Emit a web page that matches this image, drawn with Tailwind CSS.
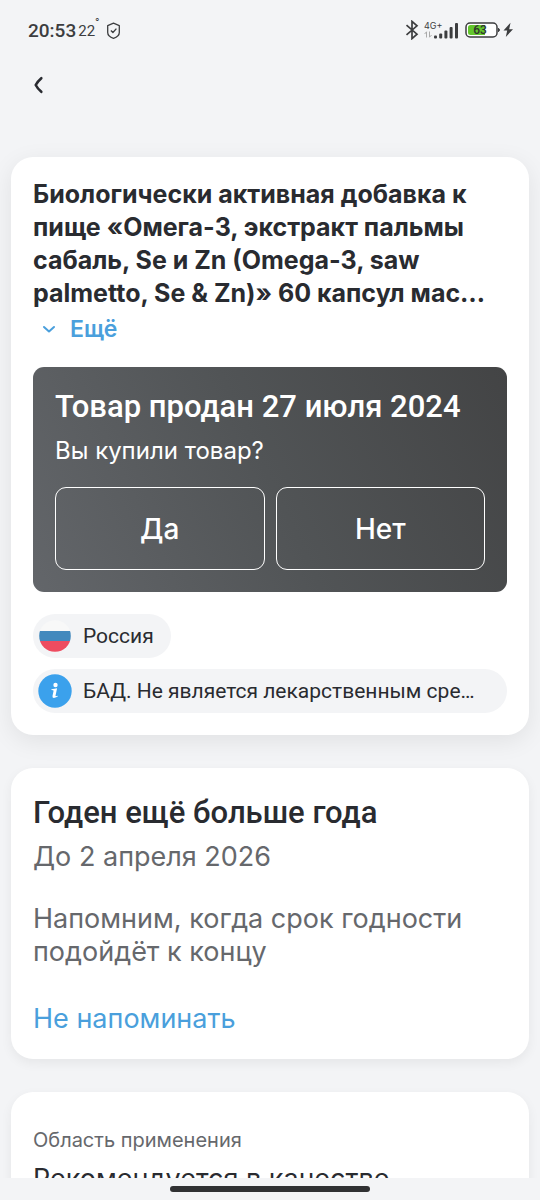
<!DOCTYPE html>
<html lang="ru">
<head>
<meta charset="utf-8">
<meta name="viewport" content="width=device-width, initial-scale=1">
<title>Карточка товара</title>
<script src="https://cdn.jsdelivr.net/npm/@tailwindcss/browser@4"></script>
</head>
<body class="flex h-screen flex-col bg-[#f3f4f6] font-['Inter',sans-serif] text-[#292b30]">
  <!-- Status bar -->
  <div class="flex h-[60px] shrink-0 items-center justify-between pr-[26px] pl-7 text-[#3c3d3f]">
    <div class="flex items-center pt-0.5">
      <span class="font-['Roboto',sans-serif] text-[19px] leading-6 font-medium">20:53</span>
      <span class="ml-0.5 flex font-['Roboto',sans-serif] text-[15px] leading-6 font-normal">22<span class="-mt-1 text-xs">°</span></span>
      <svg class="ml-1.5 h-[18px] w-[15px]" viewBox="0 0 15 18" fill="none" stroke="currentColor" stroke-width="1.3" stroke-linejoin="round"><path d="M7.5 1.2 13.3 3.6V10.6C13.3 13.4 10.6 15.4 7.5 16.4 4.4 15.4 1.7 13.4 1.7 10.6V3.6Z"/><path d="m4.9 8.5 2 2L10.4 6.6"/></svg>
    </div>
    <div class="flex items-center">
      <svg class="h-5 w-3.5" viewBox="0 0 14 20" fill="none" stroke="currentColor" stroke-width="1.7"><path d="m1.5 5.2 10.5 9L7 18.6V1.4L12 5.8 1.5 14.8"/></svg>
      <div class="ml-[5px] flex h-5 w-[35px] items-end">
        <div class="flex flex-col">
          <span class="w-2.5 text-[9px] leading-[10px] font-normal">4G+</span>
          <svg class="h-[9px] w-[9px]" viewBox="0 0 9 9" fill="none" stroke="#aaa" stroke-width="1"><path d="M2.500 6.500V.8L.6 3M5.500.5V6.200L7.600 4"/></svg>
        </div>
        <svg class="h-5 w-[25px]" viewBox="0 0 25 20" fill="currentColor"><rect x="0" y="15.500" width="3" height="3" rx="1"/><rect x="5.200" y="13.500" width="3" height="5" rx="1"/><rect x="10.400" y="10.500" width="3" height="8" rx="1"/><rect x="15.600" y="7" width="3" height="11.500" rx="1"/><rect x="21" y="3" width="3" height="15.500" rx="1"/></svg>
      </div>
      <svg class="ml-1.5 h-4 w-[49px]" viewBox="0 0 49 16"><rect x="1" y="1" width="31" height="14" rx="4" fill="#fff" stroke="#3c3d3f" stroke-width="1.500"/><path d="M5.500 3H20V13H5.500A2.500 2.500 0 0 1 3 10.500V5.500A2.500 2.500 0 0 1 5.500 3Z" fill="#62c62b"/><path d="M33.500 6.300q2 1.700 0 3.400Z" fill="#3c3d3f" stroke="#3c3d3f"/><text x="15" y="12" text-anchor="middle" font-family="Roboto,sans-serif" font-size="12" font-weight="500" fill="#30332e">63</text><path d="M45.500.8 38.500 8.600H42.200L40.800 15 48 7.200H44.200Z" fill="#3c3d3f"/></svg>
    </div>
  </div>

  <header class="flex h-[50px] shrink-0 items-center pl-[27px]">
    <button type="button" aria-label="Назад" class="flex size-6 items-center justify-center">
      <svg class="h-[18px] w-3" viewBox="0 0 12 18" fill="none" stroke="currentColor" stroke-width="2.600" stroke-linecap="round" stroke-linejoin="round"><path d="M8.300 2.200Q4.500 5.500 2.700 9 4.500 12.500 8.300 15.800"/></svg>
    </button>
  </header>

  <main class="min-h-0 flex-1 space-y-[33px] overflow-hidden px-[11px] pt-[47px]">
    <section class="rounded-[22px] bg-white px-[22px] pt-[21px] pb-[22px] shadow-[0_6px_24px_rgba(0,0,0,0.08)]">
      <h1 class="text-[25px] leading-[33px] font-bold">Биологически активная добавка к пище «Омега-3, экстракт пальмы сабаль, Se и Zn (Omega-3, saw palmetto, Se &amp; Zn)» 60 капсул мас…</h1>
      <button type="button" class="flex h-[38px] items-center gap-[13px] pl-2 text-[23px] leading-7 font-semibold text-[#4a9fdc]">
        <svg class="size-4" viewBox="0 0 16 16" fill="none" stroke="currentColor" stroke-width="2" stroke-linecap="round" stroke-linejoin="round"><path d="m3 6 5 4.500L13 6"/></svg>Ещё
      </button>
      <div class="mt-[19px] rounded-[11px] bg-linear-[65deg,#63666a,#515456_50%,#434445] p-[22px] text-white">
        <h2 class="font-['Roboto',sans-serif] text-[31px] leading-9 font-medium">Товар продан 27 июля 2024</h2>
        <p class="mt-2 text-2xl leading-9">Вы купили товар?</p>
        <div class="mt-[18px] grid grid-cols-2 gap-[11px]">
          <button type="button" class="h-[83px] rounded-[11px] border-[1.5px] border-white text-[28px] font-medium">Да</button>
          <button type="button" class="h-[83px] rounded-[11px] border-[1.5px] border-white text-[28px] font-medium">Нет</button>
        </div>
      </div>
      <div class="mt-[22px] flex flex-col items-start gap-[11px] font-['Roboto',sans-serif] text-[21px] leading-6">
        <div class="flex h-11 items-center gap-[11px] rounded-full bg-[#f3f4f6] pr-[17px] pl-[5px]">
          <svg class="size-[34px]" viewBox="0 0 34 34"><clipPath id="flag"><circle cx="17" cy="17" r="15.800"/></clipPath><g clip-path="url(#flag)"><path d="M0 0H34V12H0Z" fill="#f8f8f8"/><path d="M0 12H34V22H0Z" fill="#4389bd"/><path d="M0 22H34V34H0Z" fill="#ee4c60"/></g></svg>
          <span>Россия</span>
        </div>
        <div class="flex h-11 w-full items-center gap-[11px] rounded-full bg-[#f3f4f6] pr-[22px] pl-[5px]">
          <svg class="size-[34px] shrink-0" viewBox="0 0 34 34"><circle cx="17" cy="17" r="16.700" fill="#3ba1ec"/><circle cx="17.500" cy="11" r="2.200" fill="#fff"/><path d="M13.500 15.200Q16.500 15 19.100 14.300L17.500 21.700Q17.400 22.600 19.700 21.800L19.500 22.800Q14 25.400 14.500 22L15.600 16.700Q15.600 16.100 13.300 16.100Z" fill="#fff"/></svg>
          <span class="min-w-0 truncate">БАД. Не является лекарственным сре…</span>
        </div>
      </div>
    </section>

    <section class="rounded-[22px] bg-white px-[22px] pt-[27px] pb-6 shadow-[0_4px_12px_rgba(0,0,0,0.06)]">
      <h2 class="font-['Roboto',sans-serif] text-[31px] leading-9 font-medium">Годен ещё больше года</h2>
      <p class="mt-2 text-[27px] leading-9 text-[#66686c]">До 2 апреля 2026</p>
      <p class="mt-[27px] text-[27px] leading-[33px] text-[#66686c]">Напомним, когда срок годности подойдёт к концу</p>
      <button type="button" class="mt-[34px] block text-[27px] leading-[33px] text-[#4a9fdc]">Не напоминать</button>
    </section>

    <section class="rounded-[22px] bg-white p-[22px] pt-9 shadow-[0_4px_12px_rgba(0,0,0,0.06)]">
      <h3 class="text-xl leading-6 text-[#66686c]">Область применения</h3>
      <p class="mt-2.5 text-[27px] leading-[33px]">Рекомендуется в качестве</p>
    </section>
  </main>

  <footer class="z-10 flex h-[22px] shrink-0 items-center justify-center bg-[#f3f4f6]">
    <div class="h-1.5 w-[200px] rounded-full bg-[#303133]"></div>
  </footer>
</body>
</html>
